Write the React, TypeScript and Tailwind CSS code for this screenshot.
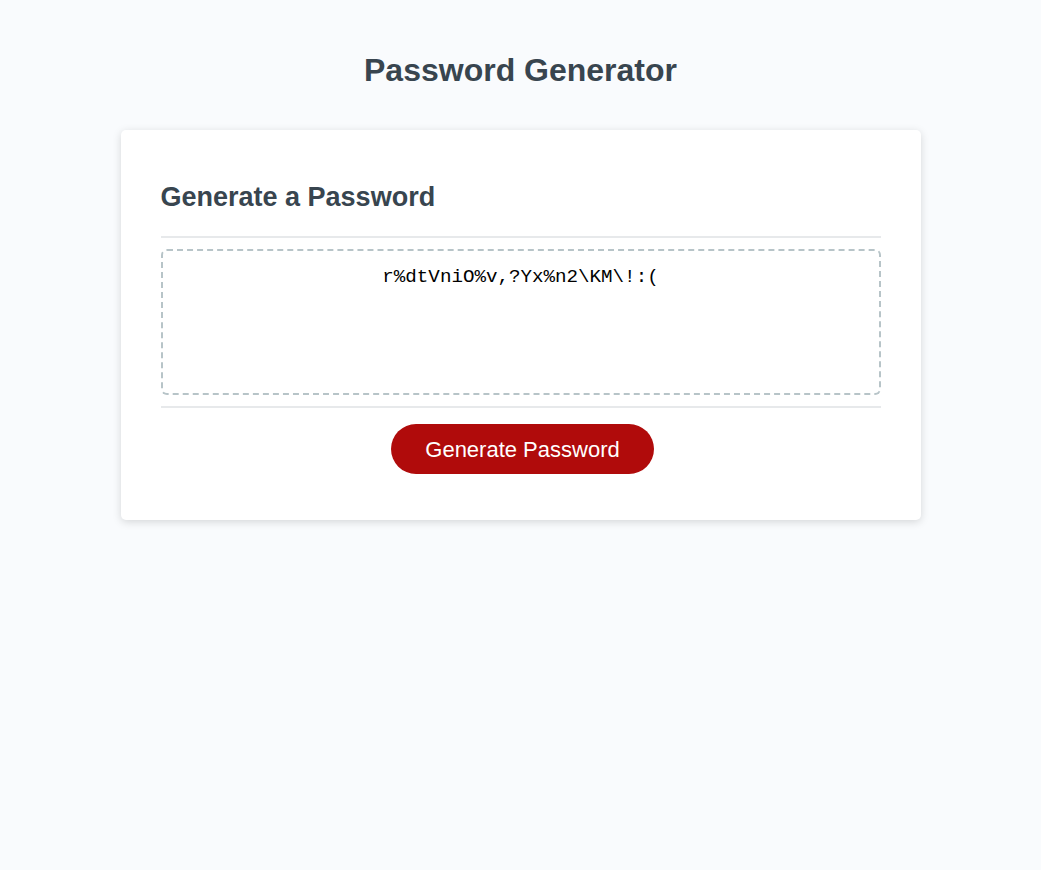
import { useState } from 'react'

const CHARS = 'abcdefghijklmnopqrstuvwxyzABCDEFGHIJKLMNOPQRSTUVWXYZ0123456789!"#$%&\'()*+,-./:;<=>?@[\\]^_`{|}~'

export default function App() {
  const [password, setPassword] = useState('r%dtVniO%v,?Yx%n2\\KM\\!:(')

  const generate = () => {
    let out = ''
    for (let i = 0; i < 24; i++) {
      out += CHARS[Math.floor(Math.random() * CHARS.length)]
    }
    setPassword(out)
  }

  return (
    <div className="min-h-screen bg-[#f9fbfd] px-4 pt-[50px] font-['Liberation_Sans',Arial,sans-serif] text-[#38454f]">
      <h1 className="text-center text-[32px] leading-[40px] font-bold">Password Generator</h1>

      <div className="mx-auto mt-10 max-w-[800px] rounded-[5px] bg-white px-10 pt-[51px] pb-[46px] shadow-[0_2px_8px_rgba(0,0,0,0.15)]">
        <div className="border-b-2 border-[#e7e9eb] pb-[23px]">
          <h2 className="text-[27px] leading-[32px] font-bold">Generate a Password</h2>
        </div>

        <div className="py-[11px]">
          <textarea
            readOnly
            value={password}
            className="block h-[146px] w-full resize-none overflow-hidden rounded-[6px] border-2 border-dashed border-[#b7c4c8] px-4 pt-[16px] text-center font-['Liberation_Mono','Courier_New',monospace] text-[19.2px] leading-[20px] text-black outline-none"
          />
        </div>

        <div className="flex justify-center border-t-2 border-[#e7e9eb] pt-[16px]">
          <button
            onClick={generate}
            className="ml-1 h-[50px] w-[263px] cursor-pointer rounded-full bg-[#b00b0b] text-[22px] text-white"
          >
            Generate Password
          </button>
        </div>
      </div>
    </div>
  )
}
